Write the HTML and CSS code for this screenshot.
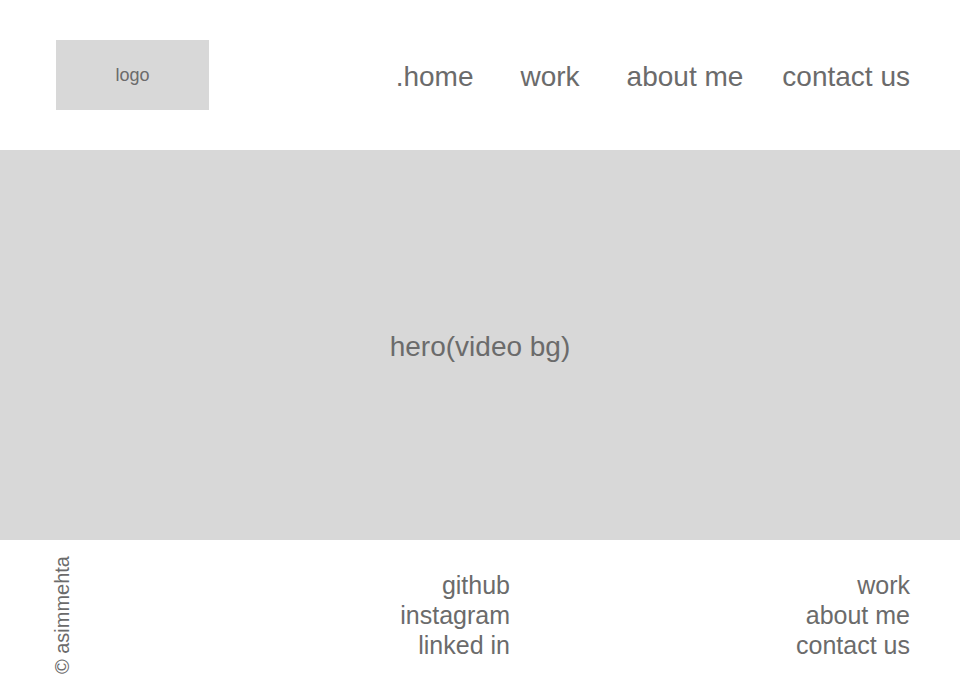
FILE: index.html
```html
<!DOCTYPE html>
<html lang="en">
<head>
<meta charset="utf-8">
<meta name="viewport" content="width=device-width, initial-scale=1">
<title>asimmehta</title>
<link rel="stylesheet" href="styles.css">
</head>
<body>
<header class="header">
  <a class="logo" href="#">logo</a>
  <nav class="nav">
    <a href="#">.home</a>
    <a href="#">work</a>
    <a href="#">about me</a>
    <a class="contact" href="#">contact us</a>
  </nav>
</header>
<main class="hero"><h1>hero(video bg)</h1></main>
<footer class="footer">
  <p class="copyright">© asimmehta</p>
  <nav class="links">
    <a href="#">github</a>
    <a href="#">instagram</a>
    <a href="#">linked in</a>
  </nav>
  <nav class="links">
    <a href="#">work</a>
    <a href="#">about me</a>
    <a href="#">contact us</a>
  </nav>
</footer>
</body>
</html>
```
FILE: styles.css
```css
* { box-sizing: border-box; }

body {
  margin: 0;
  min-height: 100vh;
  display: flex;
  flex-direction: column;
  background: #fff;
  color: #6b6b6b;
  font-family: "Liberation Sans", Arial, sans-serif;
}

a { color: inherit; text-decoration: none; }

.header {
  display: flex;
  align-items: center;
  justify-content: space-between;
  padding: 40px 50px 40px 56px;
}

.logo {
  display: flex;
  align-items: center;
  justify-content: center;
  width: 153px;
  height: 70px;
  background: #d8d8d8;
  font-size: 18px;
}

.nav {
  display: flex;
  gap: 47px;
  padding-top: 4px;
  font-size: 28px;
  line-height: 32px;
}

.contact { margin-left: -8px; }

.hero {
  flex: 1;
  display: flex;
  align-items: center;
  justify-content: center;
  padding-top: 4px;
  background: #d8d8d8;
}

.hero h1 {
  margin: 0;
  font-size: 28px;
  font-weight: 400;
  line-height: 32px;
}

.footer {
  display: grid;
  grid-template-columns: 1fr 1fr 400px;
  align-items: center;
  padding: 16px 50px;
}

.copyright {
  margin: 0;
  font-size: 20px;
  line-height: 24px;
  writing-mode: vertical-rl;
  text-orientation: sideways;
  transform: rotate(180deg);
  justify-self: start;
}

.links {
  display: flex;
  flex-direction: column;
  align-items: flex-end;
  font-size: 25px;
  line-height: 30px;
}
```
